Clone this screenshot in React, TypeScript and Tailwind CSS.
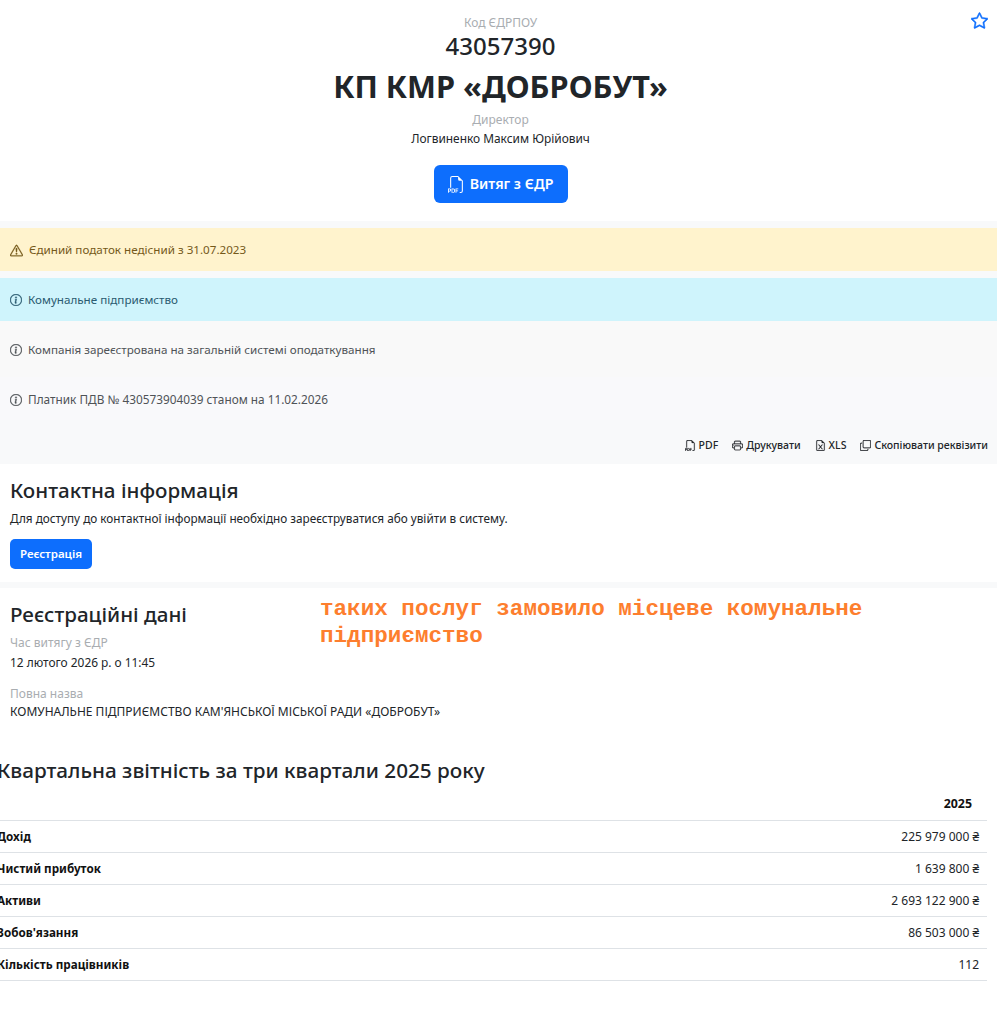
import {
  BsStar,
  BsFiletypePdf,
  BsExclamationTriangle,
  BsInfoCircle,
  BsPrinter,
  BsFileEarmarkExcel,
  BsCopy,
} from 'react-icons/bs'

const rows = [
  { label: 'Дохід', value: '225 979 000 ₴' },
  { label: 'Чистий прибуток', value: '1 639 800 ₴' },
  { label: 'Активи', value: '2 693 122 900 ₴' },
  { label: "Зобов'язання", value: '86 503 000 ₴' },
  { label: 'Кількість працівників', value: '112' },
]

const actions = [
  { label: 'PDF', icon: BsFiletypePdf },
  { label: 'Друкувати', icon: BsPrinter },
  { label: 'XLS', icon: BsFileEarmarkExcel },
  { label: 'Скопіювати реквізити', icon: BsCopy },
]

export default function App() {
  return (
    <div className="min-h-[1024px] bg-white font-['Noto_Sans',sans-serif] text-[#212529]">
      <header className="relative flex h-[221px] flex-col items-center pl-[4px] pt-[14px]">
        <BsStar className="absolute right-[9px] top-[12px] size-[17px] stroke-[0.5] text-[#0d6efd]" />
        <p className="text-[12px] leading-[17px] text-[#a9adb1]">Код ЄДРПОУ</p>
        <p className="text-[24px] font-medium leading-[30px]">43057390</p>
        <h1 className="mt-[4px] text-[30.7px] font-bold leading-[42px]">КП КМР «ДОБРОБУТ»</h1>
        <p className="mt-[4px] text-[12px] leading-[17px] text-[#a9adb1]">Директор</p>
        <p className="mt-[1px] text-[11.9px] leading-[18px]">Логвиненко Максим Юрійович</p>
        <button className="mt-[18px] flex h-[38px] w-[134px] items-center justify-center gap-[5px] rounded-[6px] bg-[#0d6efd] text-[14.2px] font-semibold text-white">
          <BsFiletypePdf className="size-[17px]" />
          Витяг з ЄДР
        </button>
      </header>

      <div className="bg-[#f8f9fa] pt-[7px]">
        <div className="flex h-[43px] items-center gap-[6px] bg-[#fff3cd] pl-[10px] pt-[1px] text-[11.65px] text-[#75591a]">
          <BsExclamationTriangle className="size-[13px] stroke-[0.4]" />
          Єдиний податок недісний з 31.07.2023
        </div>
        <div className="mt-[7px] flex h-[43px] items-center gap-[6px] bg-[#cff4fc] pl-[10px] pt-[1px] text-[11.65px] text-[#2a5a70]">
          <BsInfoCircle className="size-[12px] stroke-[0.5]" />
          Комунальне підприємство
        </div>
        <div className="flex h-[56px] items-center gap-[6px] bg-[#f9f9f9] pl-[10px] pt-[2px] text-[11.65px] text-[#4f5357]">
          <BsInfoCircle className="size-[12px] stroke-[0.5]" />
          Компанія зареєстрована на загальній системі оподаткування
        </div>
        <div className="flex h-[43px] items-center gap-[6px] bg-[#f9f9fb] pl-[10px] pt-[2px] text-[11.8px] text-[#4f5357]">
          <BsInfoCircle className="size-[12px] stroke-[0.5]" />
          Платник ПДВ № 430573904039 станом на 11.02.2026
        </div>
        <div className="flex h-[44px] items-center justify-end gap-[14px] pr-[9px] pt-[7px] text-[10.5px] font-medium">
          {actions.map((a) => (
            <span key={a.label} className="flex items-center gap-[3px]">
              <a.icon className="size-[11px] stroke-[0.3]" />
              {a.label}
            </span>
          ))}
        </div>
      </div>

      <section className="h-[118px] rounded-b-[6px] bg-white pl-[10px] pt-[12px]">
        <h2 className="text-[20.6px] font-medium leading-[28px]">Контактна інформація</h2>
        <p className="mt-[5px] text-[11.75px] leading-[18px]">
          Для доступу до контактної інформації необхідно зареєструватися або увійти в систему.
        </p>
        <button className="mt-[12px] h-[30px] w-[82px] rounded-[5px] bg-[#0d6efd] text-[11.5px] font-semibold text-white">
          Реєстрація
        </button>
      </section>

      <div className="h-[6px] bg-[#f8f9fa]" />

      <section className="flex h-[155px] pl-[10px] pt-[12px]">
        <div className="w-[310px]">
          <h2 className="text-[20.6px] font-medium leading-[28px]">Реєстраційні дані</h2>
          <p className="mt-[6px] text-[12px] leading-[17px] text-[#a9adb1]">Час витягу з ЄДР</p>
          <p className="mt-[2px] text-[11.9px] leading-[18px]">12 лютого 2026 р. о 11:45</p>
          <p className="mt-[14px] text-[12px] leading-[17px] text-[#a9adb1]">Повна назва</p>
          <p className="mt-[1px] whitespace-nowrap text-[12px] leading-[18px]">
            КОМУНАЛЬНЕ ПІДПРИЄМСТВО КАМ'ЯНСЬКОЇ МІСЬКОЇ РАДИ «ДОБРОБУТ»
          </p>
        </div>
        <p className="-mt-[4px] h-fit w-[560px] font-['Liberation_Mono',monospace] text-[22.6px] font-bold leading-[27px] text-[#fd7e2e]">
          таких послуг замовило місцеве комунальне підприємство
        </p>
      </section>

      <section className="-ml-[3px] mr-[10px]">
        <h2 className="mt-[13px] text-[20.7px] font-medium leading-[28px]">
          Квартальна звітність за три квартали 2025 року
        </h2>
        <table className="mt-[4px] w-full text-[12px]">
          <thead>
            <tr className="h-[32px] border-b border-[#dee2e6]">
              <th />
              <th className="pr-[15px] pt-[1px] text-right text-[12.4px] font-bold text-[#111]">2025</th>
            </tr>
          </thead>
          <tbody>
            {rows.map((r) => (
              <tr key={r.label} className="h-[32px] border-b border-[#dee2e6]">
                <td className="pt-[2px] text-[11.7px] font-bold text-[#111]">{r.label}</td>
                <td className="pr-[8px] pt-[2px] text-right">{r.value}</td>
              </tr>
            ))}
          </tbody>
        </table>
      </section>
    </div>
  )
}
